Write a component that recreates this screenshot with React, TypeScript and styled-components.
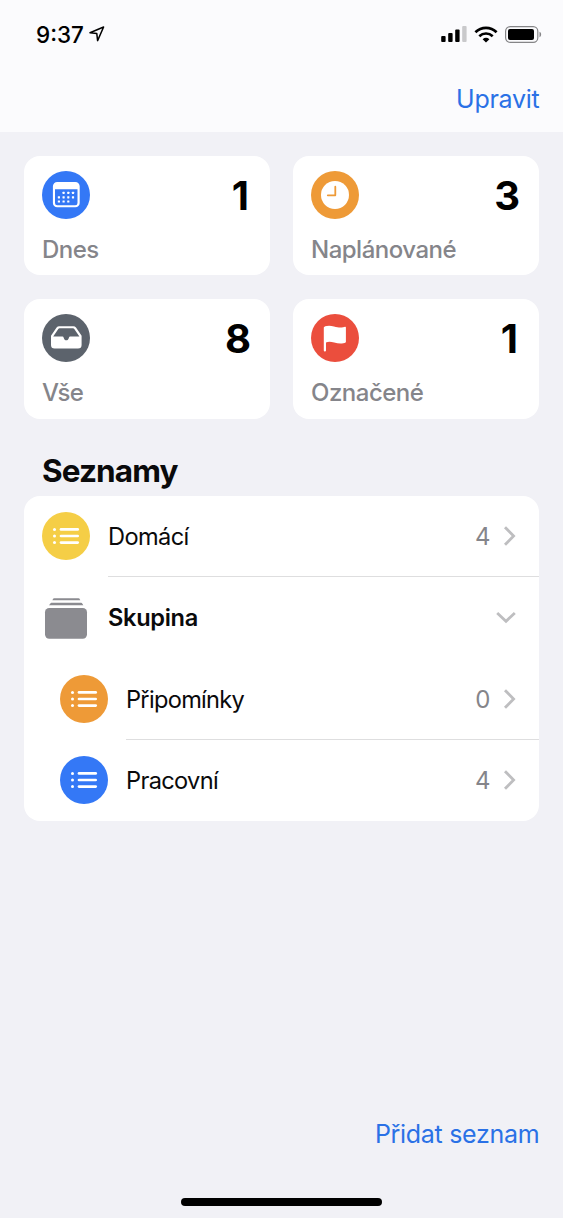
import React from 'react';
import styled, { createGlobalStyle } from 'styled-components';

const GlobalStyle = createGlobalStyle`
  * { box-sizing: border-box; }
  body { margin: 0; background: #f1f1f6; }
  svg { display: block; flex: none; }
`;

const Screen = styled.div`
  width: 563px;
  height: 1218px;
  display: flex;
  flex-direction: column;
  background: #f1f1f6;
  color: #0a0a0b;
  font-family: Inter, 'Liberation Sans', sans-serif;
  overflow: hidden;
`;

const Header = styled.header`
  height: 132px;
  flex: none;
  background: #fbfbfd;
`;

const StatusBar = styled.div`
  height: 68px;
  padding: 0 21px 0 36px;
  display: flex;
  align-items: center;
  justify-content: space-between;
`;

const StatusGroup = styled.div<{ $gap: number }>`
  display: flex;
  align-items: center;
  gap: ${(p) => p.$gap}px;
`;

const Time = styled.span`
  padding-top: 2px;
  font-size: 22.5px;
  font-weight: 500;
  line-height: 28px;
  letter-spacing: 0;
  color: #000;
`;

const NavBar = styled.div`
  height: 62px;
  padding: 0 24px;
  display: flex;
  align-items: center;
  justify-content: flex-end;
`;

const TextButton = styled.button<{ $tracking: number }>`
  border: 0;
  padding: 0;
  background: none;
  color: #2a71e6;
  font-family: inherit;
  font-size: 25px;
  font-weight: 370;
  line-height: 32px;
  letter-spacing: ${(p) => p.$tracking}px;
  margin-right: ${(p) => p.$tracking}px;
`;

const Main = styled.main`
  flex: 1;
  padding: 24px 24px 0;
`;

const CardGrid = styled.section`
  display: grid;
  grid-template-columns: 246px 246px;
  grid-auto-rows: 119.3px;
  column-gap: 23px;
  row-gap: 24px;
`;

const Card = styled.article`
  padding: 15px 18px 0;
  background: #fff;
  border-radius: 16px;
`;

const CardTop = styled.div`
  display: flex;
  justify-content: space-between;
  height: 48px;
`;

const Count = styled.span<{ $shift: number }>`
  padding-top: 1px;
  font-size: 40px;
  font-weight: 700;
  line-height: 48px;
  color: #000;
  margin-right: ${(p) => p.$shift}px;
`;

const CardLabel = styled.div`
  margin-top: 15px;
  font-size: 24px;
  font-weight: 500;
  line-height: 32px;
  letter-spacing: -0.5px;
  color: #85858a;
`;

const Disc = styled.div<{ $color: string }>`
  width: 48px;
  height: 48px;
  flex: none;
  border-radius: 50%;
  background: ${(p) => p.$color};
`;

const SectionTitle = styled.h2`
  margin: 33px 0 6px 18px;
  font-size: 31.5px;
  font-weight: 700;
  line-height: 38px;
  letter-spacing: -0.9px;
`;

const List = styled.section`
  background: #fff;
  border-radius: 16px;
  overflow: hidden;
`;

const Row = styled.div<{ $indent?: boolean }>`
  height: 81.4px;
  padding-left: ${(p) => (p.$indent ? 36 : 18)}px;
  display: flex;
  gap: 18px;
  align-items: center;
`;

const RowBody = styled.div<{ $divider?: boolean }>`
  flex: 1;
  align-self: stretch;
  padding-right: 23px;
  display: flex;
  align-items: center;
  box-shadow: ${(p) => (p.$divider ? 'inset 0 -1px #dededf' : 'none')};
`;

const RowName = styled.span<{ $strong?: boolean; $tracking: number }>`
  flex: 1;
  padding-top: 1px;
  font-size: 23.6px;
  font-weight: ${(p) => (p.$strong ? 600 : 370)};
  line-height: 32px;
  letter-spacing: ${(p) => p.$tracking}px;
`;

const RowCount = styled.span`
  margin-right: 12.5px;
  padding-top: 1px;
  font-size: 24px;
  font-weight: 370;
  line-height: 32px;
  color: #85858a;
`;

const Footer = styled.footer`
  height: 119px;
  padding: 19px 24px 0;
  display: flex;
  flex-direction: column;
  justify-content: space-between;
  align-items: flex-end;
`;

const HomeIndicator = styled.div`
  align-self: center;
  width: 201px;
  height: 8px;
  margin-bottom: 12px;
  border-radius: 4px;
  background: #000;
`;

const LocationIcon = () => (
  <svg width="16" height="16" viewBox="0 0 16 16" fill="none" stroke="#000" strokeWidth="1.5" strokeLinejoin="round">
    <path d="M1 6.8 14.6 1 8.6 14.6 7.8 7.6Z" />
  </svg>
);

const SignalIcon = () => (
  <svg width="26" height="16" viewBox="0 0 26 16">
    <rect x="0.2" y="10" width="4.4" height="6" rx="1" />
    <rect x="7.2" y="7" width="4.4" height="9" rx="1" />
    <rect x="14.2" y="3.5" width="4.4" height="12.5" rx="1" />
    <rect x="21.2" y="0" width="4.4" height="16" rx="1" fill="#c9c9cb" />
  </svg>
);

const WifiIcon = () => (
  <svg width="24" height="17" viewBox="0 0 24 17" fill="none" stroke="#000" strokeWidth="2.7">
    <path d="M1.4 6.2C7.4.4 16.6.4 22.6 6.2" />
    <path d="M5.3 10.2C9.2 6.6 14.8 6.6 18.7 10.2" />
    <path d="M8.6 13.2Q12 10.5 15.4 13.2L12 16.6Z" fill="#000" stroke="none" />
  </svg>
);

const BatteryIcon = () => (
  <svg width="37" height="17" viewBox="0 0 37 17">
    <rect x="0.6" y="0.6" width="32.2" height="15.8" rx="4.6" fill="none" stroke="#858587" strokeWidth="1.2" />
    <rect x="3" y="2.9" width="26" height="11.2" rx="2" />
    <path d="M34.5 5.8c2.2.8 2.2 4.6 0 5.4Z" fill="#858587" />
  </svg>
);

const CalendarIcon = () => (
  <svg width="48" height="48" viewBox="0 0 48 48" fill="#fff">
    <path
      fillRule="evenodd"
      d="M15.2 11H33.4a4.3 4.3 0 0 1 4.3 4.3V32a4.3 4.3 0 0 1-4.3 4.3H15.2a4.3 4.3 0 0 1-4.3-4.3V15.3A4.3 4.3 0 0 1 15.2 11ZM13 18.3V31.9A2.3 2.3 0 0 0 15.3 34.2H33.2A2.3 2.3 0 0 0 35.5 31.9V18.3Z"
    />
    {[
      [20.5, 20.8], [25.2, 20.8], [29.9, 20.8],
      [15.8, 25.2], [20.5, 25.2], [25.2, 25.2], [29.9, 25.2],
      [15.8, 29.4], [20.5, 29.4], [25.2, 29.4],
    ].map(([x, y]) => (
      <rect key={`${x}-${y}`} x={x} y={y} width="2.2" height="2.2" rx="0.4" />
    ))}
  </svg>
);

const ClockIcon = () => (
  <svg width="48" height="48" viewBox="0 0 48 48">
    <circle cx="24" cy="24" r="14" fill="#fff" />
    <path d="M24.3 15.7V24.3H16.8" fill="none" stroke="#ee9a37" strokeWidth="1.8" strokeLinecap="round" strokeLinejoin="round" />
  </svg>
);

const TrayIcon = () => (
  <svg width="48" height="48" viewBox="0 0 48 48">
    <path
      fillRule="evenodd"
      fill="#fff"
      d="M9 21.7 14.6 13.6Q15.6 12.3 17.2 12.3H31.4Q33 12.3 34 13.6L39.6 21.7V31Q39.6 34.6 36 34.6H12.6Q9 34.6 9 31ZM11.2 22.5H20.5Q21.4 22.5 21.7 23.8C22.3 27.2 26.3 27.2 26.9 23.8Q27.2 22.5 28.1 22.5H37.4L32.3 14.9Q31.8 14.2 31 14.2H17.6Q16.8 14.2 16.3 14.9Z"
    />
  </svg>
);

const FlagIcon = () => (
  <svg width="48" height="48" viewBox="0 0 48 48">
    <path
      d="M12.8 13.4C12.8 12.5 17.2 10.6 23 12.5C28.5 14.3 32.2 13.5 34 12.8Q34.9 12.6 34.9 13.5V28.2C31.5 30.2 27.5 29.8 23.2 28.5Q18.2 27 15 28.4V36.4Q15 37.4 13.9 37.4Q12.8 37.4 12.8 36.4Z"
      fill="#fff"
    />
  </svg>
);

const BulletListIcon = () => (
  <svg width="48" height="48" viewBox="0 0 48 48" stroke="#fff" strokeLinecap="round">
    {[17.4, 24, 30.6].map((y) => (
      <React.Fragment key={y}>
        <circle cx="12.5" cy={y} r="1.5" fill="#fff" stroke="none" />
        <path d={`M19 ${y}H35.7`} strokeWidth="2.7" />
      </React.Fragment>
    ))}
  </svg>
);

const GroupIcon = () => (
  <svg width="48" height="48" viewBox="0 0 48 48" fill="#8b8b90">
    <path d="M11.3 4.6Q11.6 4.2 12.2 4.2H36.5Q37.1 4.2 37.4 4.6L38.3 6.3H10.4Z" />
    <path d="M8.4 9.4Q8.8 8.8 9.4 8.8H39.2Q39.8 8.8 40.2 9.4L41.4 11.3H7Z" />
    <rect x="3" y="14" width="42" height="30.8" rx="4.2" />
  </svg>
);

const ChevronRight = () => (
  <svg width="13" height="20" viewBox="0 0 13 20" fill="none" stroke="#bebec0" strokeWidth="2.8">
    <path d="M2 1.2 10.6 10 2 18.8" />
  </svg>
);

const ChevronDown = () => (
  <svg width="20" height="13" viewBox="0 0 20 13" fill="none" stroke="#bebec0" strokeWidth="2.8">
    <path d="M1.2 2 10 10.3 18.8 2" />
  </svg>
);

type CardData = {
  label: string;
  count: number;
  color: string;
  icon: React.ReactNode;
  shift: number;
};

const cards: CardData[] = [
  { label: 'Dnes', count: 1, color: '#3478f6', icon: <CalendarIcon />, shift: 3 },
  { label: 'Naplánované', count: 3, color: '#ee9a37', icon: <ClockIcon />, shift: 1 },
  { label: 'Vše', count: 8, color: '#5c636c', icon: <TrayIcon />, shift: 1 },
  { label: 'Označené', count: 1, color: '#eb4e3d', icon: <FlagIcon />, shift: 3 },
];

type ListRowProps = {
  name: string;
  count: number;
  color: string;
  tracking: number;
  indent?: boolean;
  divider?: boolean;
};

const ListRow = ({ name, count, color, tracking, indent, divider }: ListRowProps) => (
  <Row $indent={indent}>
    <Disc $color={color}>
      <BulletListIcon />
    </Disc>
    <RowBody $divider={divider}>
      <RowName $tracking={tracking}>{name}</RowName>
      <RowCount>{count}</RowCount>
      <ChevronRight />
    </RowBody>
  </Row>
);

export default function App() {
  return (
    <>
      <GlobalStyle />
      <Screen>
        <Header>
          <StatusBar>
            <StatusGroup $gap={5}>
              <Time>9:37</Time>
              <LocationIcon />
            </StatusGroup>
            <StatusGroup $gap={7}>
              <SignalIcon />
              <WifiIcon />
              <BatteryIcon />
            </StatusGroup>
          </StatusBar>
          <NavBar>
            <TextButton $tracking={-0.3}>Upravit</TextButton>
          </NavBar>
        </Header>
        <Main>
          <CardGrid>
            {cards.map((card) => (
              <Card key={card.label}>
                <CardTop>
                  <Disc $color={card.color}>{card.icon}</Disc>
                  <Count $shift={card.shift}>{card.count}</Count>
                </CardTop>
                <CardLabel>{card.label}</CardLabel>
              </Card>
            ))}
          </CardGrid>
          <SectionTitle>Seznamy</SectionTitle>
          <List>
            <ListRow name="Domácí" count={4} color="#f5ce46" tracking={-0.6} divider />
            <Row>
              <GroupIcon />
              <RowBody>
                <RowName $strong $tracking={-0.3}>Skupina</RowName>
                <ChevronDown />
              </RowBody>
            </Row>
            <ListRow name="Připomínky" count={0} color="#ee9a37" tracking={-0.7} indent divider />
            <ListRow name="Pracovní" count={4} color="#3478f6" tracking={-0.65} indent />
          </List>
        </Main>
        <Footer>
          <TextButton $tracking={-0.3}>Přidat seznam</TextButton>
          <HomeIndicator />
        </Footer>
      </Screen>
    </>
  );
}
